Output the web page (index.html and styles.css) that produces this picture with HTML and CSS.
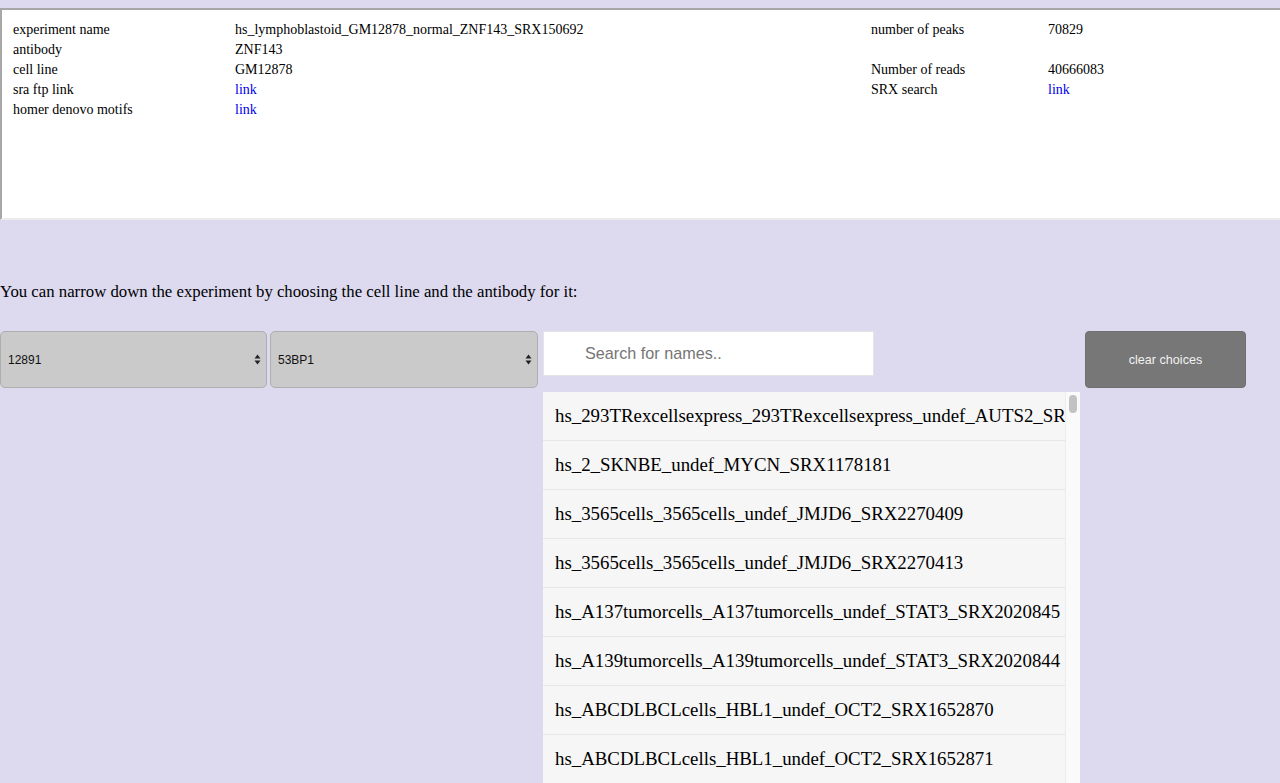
FILE: index.html
```html
<!DOCTYPE html>
<html>
<head>
<meta charset="utf-8">
<title>Experiments</title>
<link rel="stylesheet" href="styles.css">
</head>
<body>
<div class="info-box">
  <div class="info-grid">
    <div>experiment name</div><div>hs_lymphoblastoid_GM12878_normal_ZNF143_SRX150692</div><div>number of peaks</div><div>70829</div>
    <div>antibody</div><div>ZNF143</div><div></div><div></div>
    <div>cell line</div><div>GM12878</div><div>Number of reads</div><div>40666083</div>
    <div>sra ftp link</div><div><a href="#">link</a></div><div>SRX search</div><div><a href="#">link</a></div>
    <div>homer denovo motifs</div><div><a href="#">link</a></div><div></div><div></div>
  </div>
</div>

<p class="intro">You can narrow down the experiment by choosing the cell line and the antibody for it:</p>

<div class="controls">
  <div class="select-wrap sel1">
    <select class="sel"><option>12891</option></select>
    <svg class="sel-arrow" width="7" height="11" viewBox="0 0 7 11"><path d="M3.5 0.5 L6.5 4.5 L0.5 4.5 Z M3.5 10.5 L6.5 6.5 L0.5 6.5 Z" fill="#222"/></svg>
  </div>
  <div class="select-wrap sel2">
    <select class="sel"><option>53BP1</option></select>
    <svg class="sel-arrow" width="7" height="11" viewBox="0 0 7 11"><path d="M3.5 0.5 L6.5 4.5 L0.5 4.5 Z M3.5 10.5 L6.5 6.5 L0.5 6.5 Z" fill="#222"/></svg>
  </div>
  <div class="search-col">
    <input class="search" type="text" placeholder="Search for names..">
    <div class="list-box">
      <ul class="names">
        <li>hs_293TRexcellsexpress_293TRexcellsexpress_undef_AUTS2_SRX1049452</li>
        <li>hs_2_SKNBE_undef_MYCN_SRX1178181</li>
        <li>hs_3565cells_3565cells_undef_JMJD6_SRX2270409</li>
        <li>hs_3565cells_3565cells_undef_JMJD6_SRX2270413</li>
        <li>hs_A137tumorcells_A137tumorcells_undef_STAT3_SRX2020845</li>
        <li>hs_A139tumorcells_A139tumorcells_undef_STAT3_SRX2020844</li>
        <li>hs_ABCDLBCLcells_HBL1_undef_OCT2_SRX1652870</li>
        <li>hs_ABCDLBCLcells_HBL1_undef_OCT2_SRX1652871</li>
        <li>hs_ABCDLBCLcells_HBL1_undef_OCT2_SRX1652872</li>
      </ul>
      <div class="scroll-track"><div class="scroll-thumb"></div></div>
    </div>
  </div>
  <button class="clear-btn">clear choices</button>
</div>
</body>
</html>
```

FILE: styles.css
```css
html, body {
  margin: 0;
  padding: 0;
  height: 100%;
  overflow: hidden;
}
body {
  background: #dddaf0;
  font-family: "Liberation Serif", "Times New Roman", serif;
  color: #000;
}
.info-box {
  margin-top: 8px;
  height: 212px;
  box-sizing: border-box;
  background: #fff;
  border-top: 2px solid #a7a7a7;
  border-left: 2px solid #a7a7a7;
  border-bottom: 2px solid #ececec;
  padding: 10px 0 0 11px;
}
.info-grid {
  display: grid;
  grid-template-columns: 222px 636px 177px auto;
  grid-auto-rows: 20px;
  font-size: 14px;
  line-height: 20px;
}
.info-grid a {
  color: #0000ee;
  text-decoration: none;
}
.intro {
  margin: 62px 0 0 0;
  font-size: 16.75px;
  line-height: 19px;
}
.controls {
  display: flex;
  align-items: flex-start;
  margin-top: 30px;
}
.select-wrap {
  position: relative;
  height: 57px;
}
.sel1 { width: 267px; }
.sel2 { width: 268px; margin-left: 3px; }
.sel {
  appearance: none;
  -webkit-appearance: none;
  width: 100%;
  height: 57px;
  margin: 0;
  background: #cacaca;
  border: 1px solid #aeaeae;
  border-radius: 5px;
  padding: 0 0 0 7px;
  font-family: "Liberation Sans", Arial, sans-serif;
  font-size: 12px;
  color: #111;
  box-sizing: border-box;
}
.sel-arrow {
  position: absolute;
  right: 6px;
  top: 23px;
}
.search-col {
  margin-left: 5px;
  width: 537px;
  display: flex;
  flex-direction: column;
}
.search {
  width: 331px;
  height: 45px;
  box-sizing: border-box;
  border: 1px solid #e4e4e4;
  background: #fff;
  padding: 0 0 0 41px;
  margin: 0;
  font-family: "Liberation Sans", Arial, sans-serif;
  font-size: 16.2px;
  outline: none;
}
.search::placeholder {
  color: #757575;
}
.list-box {
  margin-top: 16px;
  height: 420px;
  display: flex;
  overflow: hidden;
}
.names {
  list-style: none;
  margin: 0;
  padding: 0;
  width: 522px;
  overflow: hidden;
  flex: none;
}
.names li {
  background: #f6f6f6;
  border-bottom: 1px solid #e6e6e6;
  padding: 12px 0 12px 12px;
  font-size: 18.85px;
  line-height: 24px;
  white-space: nowrap;
  overflow: hidden;
}
.scroll-track {
  width: 15px;
  flex: none;
  background: #fafafa;
  border-left: 1px solid #ececec;
  box-sizing: border-box;
}
.scroll-thumb {
  width: 8px;
  height: 18px;
  margin: 3px 0 0 3px;
  background: #c2c2c2;
  border-radius: 4px;
}
.clear-btn {
  margin-left: 5px;
  width: 161px;
  height: 57px;
  background: #777777;
  border: 1px solid #707070;
  border-radius: 4px;
  color: #f2f2f2;
  font-family: "Liberation Sans", Arial, sans-serif;
  font-size: 12.6px;
  padding: 0;
}
```
